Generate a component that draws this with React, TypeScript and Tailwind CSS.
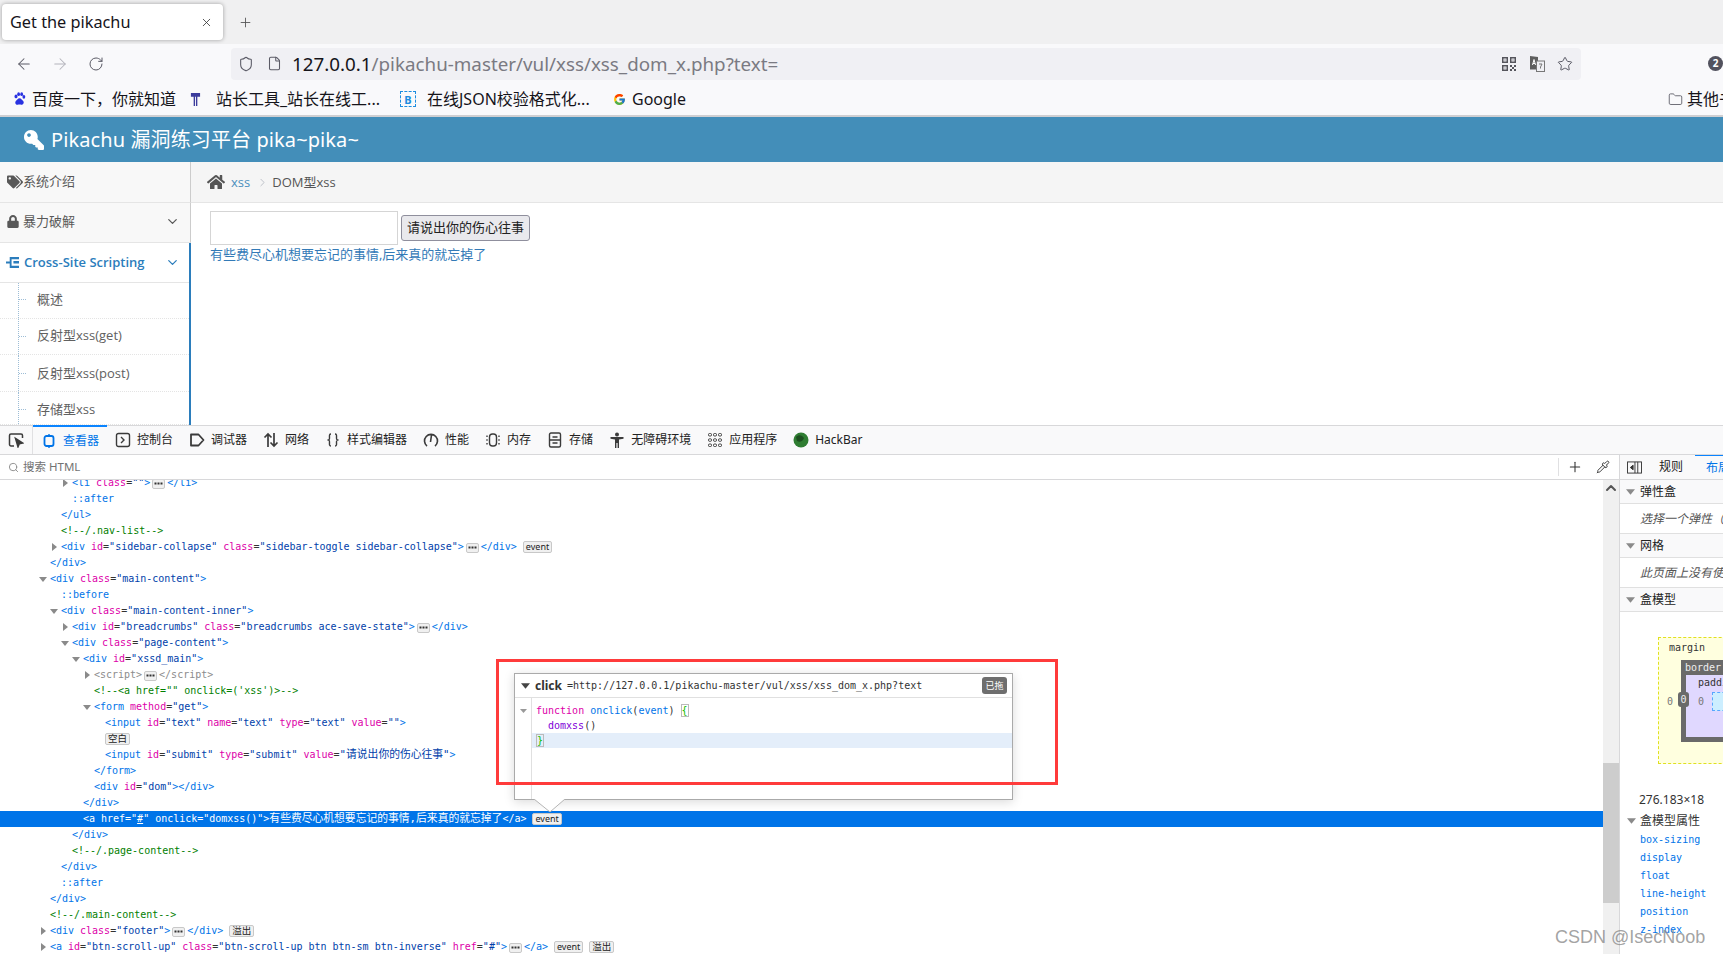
import React from "react";
import { ArrowLeft, ArrowRight, RotateCw, Shield, File, Star, Folder, X, Plus, Search, ChevronDown, ChevronRight, Pipette, ChevronUp } from "lucide-react";
import { FaHome, FaTags, FaLock, FaKey } from "react-icons/fa";
import { FcGoogle } from "react-icons/fc";

const P = ({ c }: { c: string }) => <span className="text-[#0074e8]">{c}</span>;
const A = ({ n, v }: { n: string; v: string }) => (
  <>
    {" "}
    <span className="text-[#dd00a9]">{n}</span>
    <span className="text-[#333]">=</span>
    <span className="text-[#003eaa]">"{v}"</span>
  </>
);
const Dots = () => (
  <span className="inline-flex items-center justify-center w-[13px] h-[10px] mx-[2px] border border-[#c8c8c8] rounded-[2px] bg-[#f0f0f0] align-[1px]">
    <svg viewBox="0 0 9 3" className="w-[9px] h-[3px] fill-[#333]"><rect x="0.500" y="0.500" width="2" height="2" /><rect x="3.500" y="0.500" width="2" height="2" /><rect x="6.500" y="0.500" width="2" height="2" /></svg>
  </span>
);
const Badge = ({ t, cjk }: { t: string; cjk?: boolean }) => (
  <span
    className={
      "inline-flex items-center justify-center h-[12px] ml-[6px] px-[2px] border border-[#c8c8c8] rounded-[2px] bg-[#f0f0f0] text-[#222] leading-none align-[0px] tracking-normal font-['Noto_Sans','Noto_Sans_CJK_SC',sans-serif] " +
      (cjk ? "text-[9.5px]" : "text-[9px]")
    }
  >
    {t}
  </span>
);

const Line = ({ pad, arrow, children, active }: { pad: string; arrow?: "d" | "r"; children?: React.ReactNode; active?: boolean }) => (
  <div className={"flex items-center h-4 leading-4 whitespace-pre " + pad + (active ? " bg-[#0074e8] text-white" : "")}>
    {arrow && (
      <svg viewBox="0 0 8 8" className="w-2 h-2 -ml-[11px] mr-[3px] shrink-0 fill-[#8a8a8a]">
        {arrow === "d" ? <path d="M0 2h8L4 7z" /> : <path d="M2 0v8l5-4z" />}
      </svg>
    )}
    <span className="block whitespace-pre">{children}</span>
  </div>
);
const C = ({ t }: { t: string }) => <span className="text-[#028000]">{t}</span>;

const MarkupTree = () => (
  <div className="-mt-[5px] font-['DejaVu_Sans_Mono','Noto_Sans_CJK_SC',monospace] text-[10px] tracking-[-0.01px]">
    <Line pad="pl-[72px]" arrow="r"><P c="<li" /><A n="class" v="" /><P c=">" /><Dots /><P c="</li>" /></Line>
    <Line pad="pl-[72px]"><P c="::after" /></Line>
    <Line pad="pl-[61px]"><P c="</ul>" /></Line>
    <Line pad="pl-[61px]"><C t="<!--/.nav-list-->" /></Line>
    <Line pad="pl-[61px]" arrow="r"><P c="<div" /><A n="id" v="sidebar-collapse" /><A n="class" v="sidebar-toggle sidebar-collapse" /><P c=">" /><Dots /><P c="</div>" /><Badge t="event" /></Line>
    <Line pad="pl-[50px]"><P c="</div>" /></Line>
    <Line pad="pl-[50px]" arrow="d"><P c="<div" /><A n="class" v="main-content" /><P c=">" /></Line>
    <Line pad="pl-[61px]"><P c="::before" /></Line>
    <Line pad="pl-[61px]" arrow="d"><P c="<div" /><A n="class" v="main-content-inner" /><P c=">" /></Line>
    <Line pad="pl-[72px]" arrow="r"><P c="<div" /><A n="id" v="breadcrumbs" /><A n="class" v="breadcrumbs ace-save-state" /><P c=">" /><Dots /><P c="</div>" /></Line>
    <Line pad="pl-[72px]" arrow="d"><P c="<div" /><A n="class" v="page-content" /><P c=">" /></Line>
    <Line pad="pl-[83px]" arrow="d"><P c="<div" /><A n="id" v="xssd_main" /><P c=">" /></Line>
    <Line pad="pl-[94px]" arrow="r"><span className="text-[#8c8c8c]">{"<script>"}</span><Dots /><span className="text-[#8c8c8c]">{"</script>"}</span></Line>
    <Line pad="pl-[94px]"><C t={"<!--<a href=\"\" onclick=('xss')>-->"} /></Line>
    <Line pad="pl-[94px]" arrow="d"><P c="<form" /><A n="method" v="get" /><P c=">" /></Line>
    <Line pad="pl-[105px]"><P c="<input" /><A n="id" v="text" /><A n="name" v="text" /><A n="type" v="text" /><A n="value" v="" /><P c=">" /></Line>
    <Line pad="pl-[99px]"><Badge t="空白" cjk /></Line>
    <Line pad="pl-[105px]"><P c="<input" /><A n="id" v="submit" /><A n="type" v="submit" /> <span className="text-[#dd00a9]">value</span><span className="text-[#333]">=</span><span className="text-[#003eaa] text-[10.800px]">"请说出你的伤心往事"</span><P c=">" /></Line>
    <Line pad="pl-[94px]"><P c="</form>" /></Line>
    <Line pad="pl-[94px]"><P c="<div" /><A n="id" v="dom" /><P c="></div>" /></Line>
    <Line pad="pl-[83px]"><P c="</div>" /></Line>
    <Line pad="pl-[83px]" active>
      {"<a href=\""}<span className="underline">#</span>{"\" onclick=\"domxss()\">"}
      <span className="text-[10.800px]">有些费尽心机想要忘记的事情,后来真的就忘掉了</span>
      {"</a>"}
      <Badge t="event" />
    </Line>
    <Line pad="pl-[72px]"><P c="</div>" /></Line>
    <Line pad="pl-[72px]"><C t="<!--/.page-content-->" /></Line>
    <Line pad="pl-[61px]"><P c="</div>" /></Line>
    <Line pad="pl-[61px]"><P c="::after" /></Line>
    <Line pad="pl-[50px]"><P c="</div>" /></Line>
    <Line pad="pl-[50px]"><C t="<!--/.main-content-->" /></Line>
    <Line pad="pl-[50px]" arrow="r"><P c="<div" /><A n="class" v="footer" /><P c=">" /><Dots /><P c="</div>" /><Badge t="溢出" cjk /></Line>
    <Line pad="pl-[50px]" arrow="r"><P c="<a" /><A n="id" v="btn-scroll-up" /><A n="class" v="btn-scroll-up btn btn-sm btn-inverse" /><A n="href" v="#" /><P c=">" /><Dots /><P c="</a>" /><Badge t="event" /><Badge t="溢出" cjk /></Line>
  </div>
);

const TabIcon = ({ k }: { k: number }) => {
  const cls = "w-4 h-4 shrink-0 fill-none stroke-[#3b3b3b] stroke-[1.4]";
  const icons: React.ReactNode[] = [
    <g key="0" className="stroke-[#0074e8]"><rect x="3.500" y="3" width="9" height="10" rx="2" strokeWidth="1.800" /><path d="M8 1v2M8 13v2" /></g>,
    <g key="1"><rect x="1.500" y="1.500" width="13" height="13" rx="2" /><path d="M6 5 9 8l-3 3" /></g>,
    <path key="2" d="M2 2.500h7.500L14.500 8l-5 5.500H2z" strokeWidth="1.800" strokeLinejoin="round" />,
    <path key="3" d="M5 15V2M1.500 5.500 5 2l3.500 3.500M11 1v13M7.500 10.500 11 14l3.500-3.500" strokeWidth="1.700" />,
    <path key="4" d="M6 2C4 2 4.500 4 4.500 6S4 8 2.500 8C4 8 4.500 8 4.500 10S4 14 6 14M10 2c2 0 1.500 2 1.500 4s.5 2 2 2c-1.500 0-2 0-2 2s.5 4-1.500 4" />,
    <path key="5" d="M4 14a6.500 6.500 0 1 1 8 0M7.500 10 8.500 3" strokeWidth="1.600" />,
    <g key="6"><rect x="4.500" y="2" width="7" height="12" rx="3" /><path d="M2 3.500v1.500M2 7.200v1.500M2 11v1.500M14 3.500v1.500M14 7.200v1.500M14 11v1.500" /></g>,
    <g key="7"><rect x="2.500" y="1" width="11" height="14" rx="1.500" /><path d="M5.500 5h5M5.500 11h5M2.500 8h11" /></g>,
    <g key="8" className="fill-[#3b3b3b] stroke-none"><circle cx="8" cy="2.500" r="2" /><path d="M1.500 5h13v1.800l-4.500.8V16H8.600v-5H7.400v5H6V7.600l-4.500-.8z" /></g>,
    <g key="9" strokeWidth="1"><rect x="1.500" y="1.500" width="3" height="2.500" rx="1" /><rect x="6.500" y="1.500" width="3" height="2.500" rx="1" /><rect x="11.500" y="1.500" width="3" height="2.500" rx="1" /><rect x="1.500" y="6.800" width="3" height="2.500" rx="1" /><rect x="6.500" y="6.800" width="3" height="2.500" rx="1" /><rect x="11.500" y="6.800" width="3" height="2.500" rx="1" /><rect x="1.500" y="12" width="3" height="2.500" rx="1" /><rect x="6.500" y="12" width="3" height="2.500" rx="1" /><rect x="11.500" y="12" width="3" height="2.500" rx="1" /></g>,
  ];
  return <svg viewBox="0 0 16 16" className={cls}>{icons[k]}</svg>;
};

const tabs = ["查看器", "控制台", "调试器", "网络", "样式编辑器", "性能", "内存", "存储", "无障碍环境", "应用程序"];

const Section = ({ t }: { t: string }) => (
  <div className="flex items-center h-6 pl-[6px] border-b border-[#e0e0e0] bg-[#f9f9fa] shrink-0 text-[#222] text-[12px]">
    <svg viewBox="0 0 10 8" className="w-[9px] h-2 mr-[5px] fill-[#8a8a8a]"><path d="M0 1h10L5 7z" /></svg>
    {t}
  </div>
);
const Note = ({ t }: { t: string }) => (
  <div className="flex items-center h-[30px] pl-[20px] border-b border-[#e0e0e0] italic text-[#555] text-[12px] whitespace-nowrap shrink-0">{t}</div>
);

const SubRow = ({ t, h, inner }: { t: string; h: string; inner: string }) => (
  <div className={"flex items-stretch border-b border-dotted border-[#e4e4e4] bg-white text-[#616161] " + h}>
    <div className="ml-[18px] border-l border-dotted border-[#9dbdd6]" />
    <div className={"flex items-center " + inner}>
      <div className="w-[7px] mr-[11px] border-t border-dotted border-[#9dbdd6]" />
      {t}
    </div>
  </div>
);

export default function App() {
  return (
    <div className="relative flex flex-col w-[1723px] h-[954px] overflow-hidden bg-white font-['Noto_Sans','Noto_Sans_CJK_SC',sans-serif]">
      {/* tab strip */}
      <div className="flex items-center h-[44px] shrink-0 bg-[#f0f0f1] pl-[2px]">
        <div className="flex items-center justify-between w-[221px] h-9 pl-2 pr-[10px] bg-white rounded-[4px] shadow-[0_0_4px_rgba(0,0,0,0.35)]">
          <span className="text-[16.300px] text-[#15141a] leading-none">Get the pikachu</span>
          <X className="w-[13px] h-[13px] text-[#333]" strokeWidth={1.5} />
        </div>
        <Plus className="w-[15px] h-[15px] ml-[15px] text-[#555]" strokeWidth={1.4} />
      </div>
      {/* nav bar */}
      <div className="flex items-center h-[39px] shrink-0 bg-[#f9f9fb] pl-[6px]">
        <div className="flex items-center w-[36px] justify-center"><ArrowLeft className="w-[18px] h-[18px] text-[#5b5b66]" strokeWidth={1.4} /></div>
        <div className="flex items-center w-[36px] justify-center"><ArrowRight className="w-[18px] h-[18px] text-[#b4b4bb]" strokeWidth={1.4} /></div>
        <div className="flex items-center w-[36px] justify-center"><RotateCw className="w-4 h-4 text-[#5b5b66]" strokeWidth={1.5} /></div>
        <div className="flex items-center w-[1350px] h-8 ml-[117px] pl-[7px] pr-[8px] rounded-[4px] bg-[#f0f0f4]">
          <Shield className="w-4 h-4 text-[#5b5b66]" strokeWidth={1.6} />
          <File className="w-[15px] h-[15px] ml-[13px] text-[#5b5b66]" strokeWidth={1.7} />
          <span className="ml-[10px] pt-px text-[18.800px] leading-none text-[#15141a]">127.0.0.1<span className="text-[#7a7a82]">/pikachu-master/vul/xss/xss_dom_x.php?text=</span></span>
          <div className="ml-auto flex items-center gap-[12px]">
            <svg viewBox="0 0 14 14" className="w-[14px] h-[14px] mx-px fill-[#55555c]">
              <path d="M0 0h6v6H0zm1.500 1.500v3h3v-3zM8 0h6v6H8zm1.500 1.500v3h3v-3zM0 8h6v6H0zm1.500 1.500v3h3v-3zM2.500 2.500h1v1h-1zM10.500 2.500h1v1h-1zM2.500 10.500h1v1h-1zM8 8h2v2H8zM12 8h2v2h-2zM10 10h2v2h-2zM8 12h2v2H8zM12 12h2v2h-2z" />
            </svg>
            <svg viewBox="0 0 16 16" className="w-4 h-4">
              <path d="M1 0 9 1v12.500H1z" fill="#5e5e5e" />
              <rect x="7.500" y="5" width="8" height="10.500" fill="#f0f0f4" stroke="#777" />
              <path d="M3.500 9 5 3.500l1.500 5.500M4 7.500h2" stroke="#fff" fill="none" />
              <path d="M10 8h3l-1.500 3v1.500" stroke="#777" fill="none" />
            </svg>
            <Star className="w-4 h-4 text-[#5b5b66]" strokeWidth={1.5} />
          </div>
        </div>
        <div className="flex items-center justify-center w-[15px] h-[15px] ml-[127px] rounded-full bg-[#52525e] text-white text-[10px] font-bold shrink-0">2</div>
      </div>
      {/* bookmarks */}
      <div className="flex items-center h-[34px] shrink-0 bg-[#f9f9fb] border-b-2 border-[#cfcfd2] text-[16px] text-[#15141a] whitespace-nowrap">
        <svg viewBox="0 0 14 16" className="w-[13px] h-[14px] ml-[13px] shrink-0 fill-[#2932e1]">
          <ellipse cx="3" cy="5" rx="1.700" ry="2.200" /><ellipse cx="6" cy="2.500" rx="1.600" ry="2.200" /><ellipse cx="9.500" cy="2.500" rx="1.600" ry="2.200" /><ellipse cx="12" cy="5.500" rx="1.600" ry="2.200" /><path d="M7 7c2 0 2.500 2 4 3 2 2 0 5-2 4.500-1-.3-3-.3-4 0-2 .5-4-2-2-4.500 1.500-1 2-3 4-3z" />
        </svg>
        <span className="ml-[6px] w-[144px] shrink-0">百度一下，你就知道</span>
        <svg viewBox="0 0 12 16" className="w-[11px] h-[15px] ml-[14px] shrink-0"><path d="M1 1h10v4H8v10H4V5H1z" fill="#3c3c9c" /><path d="M5.500 5h1v10h-1z" fill="#fff" /></svg>
        <span className="ml-[15px] w-[164px] shrink-0">站长工具_站长在线工...</span>
        <div className="flex items-center justify-center w-[16px] h-[16px] ml-[20px] shrink-0 border border-dashed border-[#1c8de0] text-[#1c8de0] text-[11px] font-bold leading-none">B</div>
        <span className="ml-[11px] w-[166px] shrink-0">在线JSON校验格式化...</span>
        <FcGoogle className="w-[13px] h-[13px] ml-[20px] shrink-0" />
        <span className="ml-[6px] w-[55px] shrink-0">Google</span>
        <Folder className="w-[15px] h-[15px] ml-[981px] text-[#5b5b66] shrink-0" strokeWidth={1.4} />
        <span className="ml-[4px]">其他书签</span>
      </div>
      {/* site header */}
      <div className="flex items-center h-[45px] shrink-0 bg-[#438eb9] pl-[24px] text-white text-[20px] whitespace-nowrap">
        <FaKey className="w-[20px] h-[20px] -scale-x-100 mr-[7px]" />
        <span className="tracking-[0.1px]">Pikachu 漏洞练习平台 pika~pika~</span>
      </div>
      {/* site body */}
      <div className="flex h-[263px] shrink-0 overflow-hidden text-[13px] font-['Open_Sans','Noto_Sans_CJK_SC',sans-serif]">
        <div className="w-[191px] shrink-0 flex flex-col">
          <div className="flex items-center h-[41px] pl-[7px] bg-[#f8f8f8] border-r border-b border-r-[#cccccc] border-b-[#e5e5e5] text-[#585858]">
            <FaTags className="w-[16px] h-[14px] text-[#585858]" /><span>系统介绍</span>
          </div>
          <div className="flex items-center h-[40px] pl-[7px] pr-[10px] pb-[2px] bg-[#f8f8f8] border-r border-b border-r-[#cccccc] border-b-[#e5e5e5] text-[#585858]">
            <FaLock className="w-[12px] h-[13px]" /><span className="ml-[4px]">暴力破解</span>
            <ChevronDown className="ml-auto w-[15px] h-[15px]" strokeWidth={2} />
          </div>
          <div className="flex-1 flex flex-col border-r-2 border-[#2b7dbc]">
            <div className="flex items-center h-[40px] shrink-0 pl-[6px] pr-[9px] bg-white border-b border-[#e5e5e5] text-[#2b7dbc] font-semibold">
              <svg viewBox="0 0 14 14" className="w-[13px] h-[13px] fill-[#2b7dbc] shrink-0"><path d="M4 1h2v12H4zM0 6h4v2H0zM6 1h8v2.500H6zM8 5.500h6V8H8zM6 10.500h8V13H6z" /></svg>
              <span className="ml-[5px]">Cross-Site Scripting</span>
              <ChevronDown className="ml-auto w-[15px] h-[15px]" strokeWidth={2} />
            </div>
            <SubRow t="概述" h="h-[36px] shrink-0" inner="pb-[2px]" />
            <SubRow t="反射型xss(get)" h="h-[36px] shrink-0" inner="pb-[1px]" />
            <SubRow t="反射型xss(post)" h="h-[37px] shrink-0" inner="pt-[1px]" />
            <SubRow t="存储型xss" h="flex-1" inner="pt-[3px]" />
          </div>
        </div>
        <div className="flex-1 flex flex-col">
          <div className="flex items-center h-[41px] pl-[16px] bg-[#f5f5f5] border-b border-[#e5e5e5] text-[#555]">
            <FaHome className="w-[18px] h-[16px] text-[#555]" />
            <span className="ml-[6px] pt-px text-[#4c8fbd]">xss</span>
            <ChevronRight className="w-[13px] h-[13px] ml-[6px] text-[#b2b6bf]" strokeWidth={1.5} />
            <span className="ml-[3px] pt-px">DOM型xss</span>
          </div>
          <div className="flex flex-col pl-[19px] pt-[8px]">
            <div className="flex items-center">
              <div className="w-[188px] h-[34px] border border-[#d5d5d5] bg-white" />
              <div className="flex items-center justify-center w-[129px] h-[26px] ml-[3px] border border-[#8f8f9d] rounded-[3px] bg-[#e9e9ed] text-[#222] text-[13px]">请说出你的伤心往事</div>
            </div>
            <div className="leading-[18px] text-[#337ab7]">有些费尽心机想要忘记的事情,后来真的就忘掉了</div>
          </div>
        </div>
      </div>
      {/* devtools toolbar */}
      <div className="flex items-stretch h-[30px] shrink-0 bg-[#f9f9fa] border-t border-b border-[#d8d8da] text-[12px] text-[#222] whitespace-nowrap">
        <div className="flex items-center justify-center w-[33px] border-r border-[#e0e0e2]">
          <svg viewBox="0 0 16 16" className="w-4 h-4 fill-none stroke-[#3b3b3b] stroke-[1.5]"><path d="M6 14H3a1.500 1.500 0 0 1-1.500-1.500v-9A1.500 1.500 0 0 1 3 2h10a1.500 1.500 0 0 1 1.500 1.500V6" /><path d="M7.500 6.500 14.500 11l-3.200.8-1.300 3z" fill="#3b3b3b" /></svg>
        </div>
        {tabs.map((t, i) => (
          <div key={t} className={"flex items-center gap-[6px] px-2 -mt-px " + (i === 0 ? "border-t-2 border-[#0a84ff] text-[#0074e8]" : "")}>
            <TabIcon k={i} />
            {t}
          </div>
        ))}
        <div className="flex items-center gap-[6px] px-2">
          <svg viewBox="0 0 16 16" className="w-4 h-4"><circle cx="8" cy="8" r="7.500" fill="#2f7d32" /><path d="M3 5c3-3 6-2 8 1-1 3-4 5-7 3z" fill="#1d4f20" /></svg>
          HackBar
        </div>
      </div>
      {/* devtools body */}
      <div className="flex flex-1 min-h-0">
        <div className="flex flex-col w-[1619px] shrink-0">
          <div className="flex items-center h-[25px] shrink-0 border-b border-[#d8d8da] pl-[8px] pr-[8px] text-[11.500px] text-[#737373]">
            <Search className="w-[11px] h-[11px] text-[#8a8a8a]" strokeWidth={2} />
            <span className="ml-[4px]">搜索 HTML</span>
            <div className="ml-auto h-[18px] border-l border-[#e0e0e2]" />
            <Plus className="w-[16px] h-[16px] ml-[8px] text-[#333]" strokeWidth={1.6} />
            <Pipette className="w-[14px] h-[14px] ml-[13px] mr-px text-[#333]" strokeWidth={1.6} />
          </div>
          <div className="flex flex-1 min-h-0">
            <div className="flex-1 overflow-hidden"><MarkupTree /></div>
            <div className="w-4 shrink-0 flex flex-col bg-[#f0f0f0]">
              <ChevronUp className="w-4 h-[16px] text-[#555]" strokeWidth={3} />
              <div className="h-[140px] mt-[267px] bg-[#cdcdcd]" />
            </div>
          </div>
        </div>
        <div className="flex flex-col flex-1 min-w-0 border-l border-[#d8d8da] overflow-hidden">
          <div className="flex items-stretch h-[25px] shrink-0 border-b border-[#d8d8da] bg-[#f9f9fa] text-[12px] text-[#222] whitespace-nowrap">
            <div className="flex items-center pl-[7px]">
              <svg viewBox="0 0 16 14" className="w-[15px] h-[13px] fill-none stroke-[#333]"><rect x="0.500" y="1" width="15" height="12" /><path d="M8.500 1v12M11.500 1v12" /><path d="M6.500 4.500v5L3.500 7z" fill="#333" /></svg>
            </div>
            <div className="flex items-center ml-[17px]">规则</div>
            <div className="flex items-center ml-[12px] pl-[11px] flex-1 -mt-px border-t-2 border-[#0a84ff] text-[#0074e8]">布局</div>
          </div>
          <Section t="弹性盒" />
          <Note t="选择一个弹性（Flex）容器或项目以继续。" />
          <Section t="网格" />
          <Note t="此页面上没有使用 CSS 网格" />
          <Section t="盒模型" />
          <div className="relative flex flex-col w-[200px] h-[127px] shrink-0 mt-[25px] ml-[38px] pl-[22px] border border-dashed border-[#e0e020] bg-[#ffffdf] font-['DejaVu_Sans_Mono',monospace] text-[10px]">
            <div className="h-[22px] -ml-[12px] pt-[3px] leading-[14px] text-[#333]">margin</div>
            <div className="flex flex-col h-[82px] bg-[#6a6a6a] pl-[5px] pb-[5px]">
              <div className="h-[15px] shrink-0 -ml-px pt-px text-[#eee] leading-[14px]">border</div>
              <div className="flex-1 pl-[12px] bg-[#e0d8ff] text-[#333] leading-[16px]">
                padding
                <div className="ml-[14px] mt-[1px] w-[60px] h-[19px] border border-dashed border-[#58a6ff] bg-[#cceeff]" />
              </div>
            </div>
            <span className="absolute left-[8px] top-[56px] text-[#777]">0</span>
            <span className="absolute left-[19px] top-[54px] flex items-center justify-center w-[11px] h-[15px] rounded-[3px] bg-[#6a6a6a] text-[#eee]">0</span>
            <span className="absolute left-[39px] top-[56px] text-[#777]">0</span>
          </div>
          <div className="mt-[28px] ml-[19px] h-[16px] leading-[16px] text-[12px] text-[#333] shrink-0">276.183×18</div>
          <div className="flex items-center h-[18px] mt-[4px] ml-[7px] text-[12px] text-[#333] shrink-0">
            <svg viewBox="0 0 10 8" className="w-[9px] h-2 mr-[4px] fill-[#8a8a8a]"><path d="M0 1h10L5 7z" /></svg>
            盒模型属性
          </div>
          <div className="ml-[20px] mt-px flex flex-col font-['DejaVu_Sans_Mono',monospace] text-[10px] leading-[18px] text-[#0074e8]">
            <span>box-sizing</span><span>display</span><span>float</span><span>line-height</span><span>position</span><span>z-index</span>
          </div>
        </div>
      </div>
      {/* event popup over markup */}
      <div className="absolute left-[514px] top-[673px] flex flex-col w-[499px] h-[127px] bg-white border border-[#aaaaaa] shadow-[0_2px_10px_rgba(0,0,0,0.15)]">
        <div className="flex items-center h-[24px] shrink-0 pl-[6px] pr-[5px] border-b border-[#e0e0e0]">
          <svg viewBox="0 0 10 8" className="w-[9px] h-2 mr-[5px] fill-[#444]"><path d="M0 1h10L5 7z" /></svg>
          <span className="text-[12px] font-bold text-[#333]">click</span>
          <span className="ml-[5px] font-['DejaVu_Sans_Mono',monospace] text-[10px] text-[#333]">=http://127.0.0.1/pikachu-master/vul/xss/xss_dom_x.php?text</span>
          <span className="ml-auto flex items-center justify-center w-[25px] h-[17px] rounded-[3px] bg-[#6e6e6e] text-white text-[9px]">已拖</span>
        </div>
        <div className="flex flex-1 min-h-0">
          <div className="w-[17px] shrink-0 border-r border-[#e0e0e0] pl-[5px] pt-[10px]">
            <svg viewBox="0 0 10 8" className="w-[7px] h-[6px] fill-[#999]"><path d="M0 1h10L5 7z" /></svg>
          </div>
          <div className="flex-1 pt-[5px] font-['DejaVu_Sans_Mono',monospace] text-[10px] leading-[15px]">
            <div className="h-[15px] pl-[4px] flex items-center">
              <span className="text-[#dd00a9]">function</span>&nbsp;<span className="text-[#0074e8]">onclick</span><span className="text-[#333]">(</span><span className="text-[#0074e8]">event</span><span className="text-[#333]">)</span>&nbsp;<span className="h-[13px] leading-[12px] border border-[#bbb] text-[#12bc00]">{"{"}</span>
            </div>
            <div className="h-[15px] pl-[16px]"><span className="text-[#8000d7]">domxss</span><span className="text-[#333]">()</span></div>
            <div className="h-[15px] pl-[4px] flex items-center bg-[#e4eefa]"><span className="h-[13px] leading-[12px] border border-[#bbb] text-[#12bc00]">{"}"}</span></div>
          </div>
        </div>
      </div>
      <svg viewBox="0 0 32 13" className="absolute left-[534px] top-[799px] w-[32px] h-[13px]">
        <path d="M0 0 16 13 31 0z" fill="#fff" />
        <path d="M0 0 16 13 31 0" fill="none" stroke="#b5b5b5" />
      </svg>
      {/* annotation */}
      <div className="absolute left-[496px] top-[659px] w-[562px] h-[126px] border-[3px] border-[#ff3b3b] pointer-events-none" />
      {/* watermark */}
      <div className="absolute left-[1555px] top-[925px] text-[18px] leading-[24px] text-[#8b8b8b]/80 font-['Liberation_Sans',sans-serif] whitespace-nowrap">CSDN @IsecNoob</div>
    </div>
  );
}
